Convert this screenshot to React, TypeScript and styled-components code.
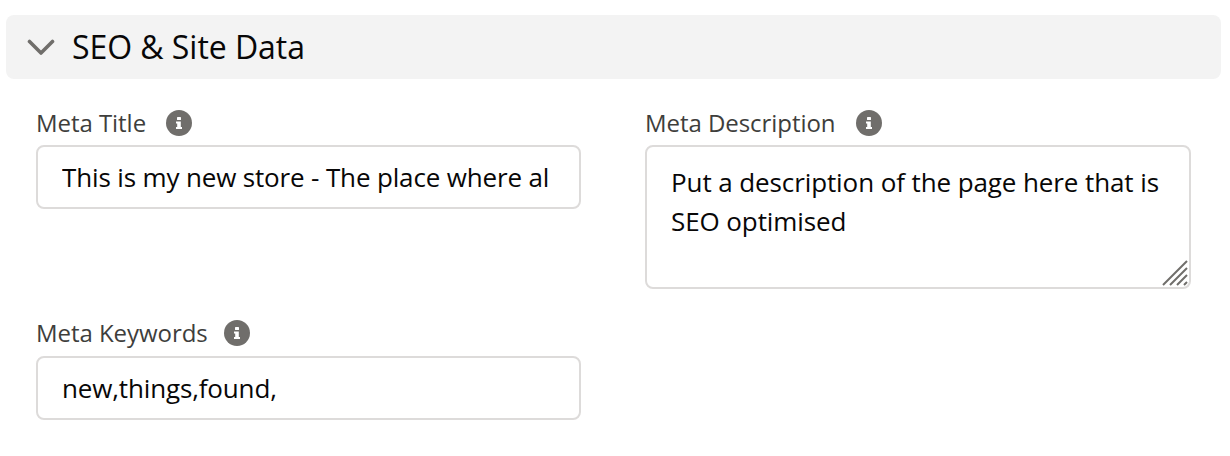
import styled, { createGlobalStyle } from "styled-components"

const Global = createGlobalStyle`
html, body {
  margin: 0;
  padding: 0;
  background: #fff;
  font-family: "Open Sans", "Noto Sans", sans-serif;
}
`

const Page = styled.div`
width: 1230px;
height: 456px;
padding: 15px 9px 0 6px;
box-sizing: border-box;
overflow: hidden;
`

const SectionHeader = styled.div`
height: 64px;
display: flex;
align-items: center;
gap: 17px;
padding-left: 21px;
background: #f3f3f3;
border-radius: 8px;
`

const SectionTitle = styled.h2`
margin: 0;
font-size: 32px;
line-height: 44px;
font-weight: 400;
letter-spacing: -0.05px;
color: #080707;
`

const Fields = styled.div`
display: grid;
grid-template-columns: 545px 546px;
column-gap: 64px;
row-gap: 29px;
padding: 29px 0 0 30px;
`

const Field = styled.div`
display: flex;
flex-direction: column;
`

const LabelRow = styled.div<{ $below: number; $gap: number }>`
height: 30px;
margin-bottom: ${(p) => p.$below}px;
display: flex;
align-items: center;
gap: ${(p) => p.$gap}px;
`

const Label = styled.label`
margin-top: -2px;
font-size: 24px;
letter-spacing: -0.05px;
color: #3e3e3c;
`

const InfoBadge = styled.span`
display: flex;
`

const Input = styled.input`
height: 64px;
box-sizing: border-box;
padding: 0 29px 0 24px;
border: 2px solid #dddbda;
border-radius: 8px;
font-family: inherit;
font-size: 26px;
letter-spacing: -0.15px;
color: #080707;
background: #fff;
outline: none;
`

const AreaWrap = styled.div`
position: relative;
display: flex;
`

const Area = styled.textarea`
width: 100%;
height: 144px;
box-sizing: border-box;
padding: 16px 24px;
border: 2px solid #dddbda;
border-radius: 8px;
font-family: inherit;
font-size: 26px;
line-height: 39px;
letter-spacing: -0.1px;
color: #080707;
background: #fff;
outline: none;
resize: none;
`

const Grip = styled.svg`
position: absolute;
right: 3px;
bottom: 3px;
`

function Info() {
    return (
        <InfoBadge>
            <svg width="26" height="26" viewBox="0 0 26 26">
                <circle cx="13" cy="13" r="13" fill="#706e6b" />
                <rect x="11" y="7" width="4" height="3" rx="0.6" fill="#fff" />
                <path d="M10 11.5h4.8v5.6H16v2H10v-2h1.2v-3.6H10z" fill="#fff" />
            </svg>
        </InfoBadge>
    )
}

function Chevron() {
    return (
        <svg width="28" height="18" viewBox="0 0 28 18">
            <path d="M2.5 3.5L14 15L25.5 3.5" fill="none" stroke="#706e6b" strokeWidth="3.6" strokeLinecap="round" strokeLinejoin="round" />
        </svg>
    )
}

export default function App() {
    return (
        <Page>
            <Global />
            <SectionHeader>
                <Chevron />
                <SectionTitle>SEO &amp; Site Data</SectionTitle>
            </SectionHeader>
            <Fields>
                <Field>
                    <LabelRow $below={7} $gap={20}>
                        <Label>Meta Title</Label>
                        <Info />
                    </LabelRow>
                    <Input readOnly value="This is my new store - The place where all the new things are found" />
                </Field>
                <Field>
                    <LabelRow $below={7} $gap={20}>
                        <Label>Meta Description</Label>
                        <Info />
                    </LabelRow>
                    <AreaWrap>
                        <Area readOnly value="Put a description of the page here that is SEO optimised" />
                        <Grip width="26" height="26" viewBox="0 0 26 26">
                            <path d="M1 25L25 1M8 25L25 8M15 25L25 15M22 25L25 22" stroke="#706e6b" strokeWidth="2" fill="none" />
                        </Grip>
                    </AreaWrap>
                </Field>
                <Field>
                    <LabelRow $below={8} $gap={16}>
                        <Label>Meta Keywords</Label>
                        <Info />
                    </LabelRow>
                    <Input readOnly value="new,things,found," />
                </Field>
            </Fields>
        </Page>
    )
}
